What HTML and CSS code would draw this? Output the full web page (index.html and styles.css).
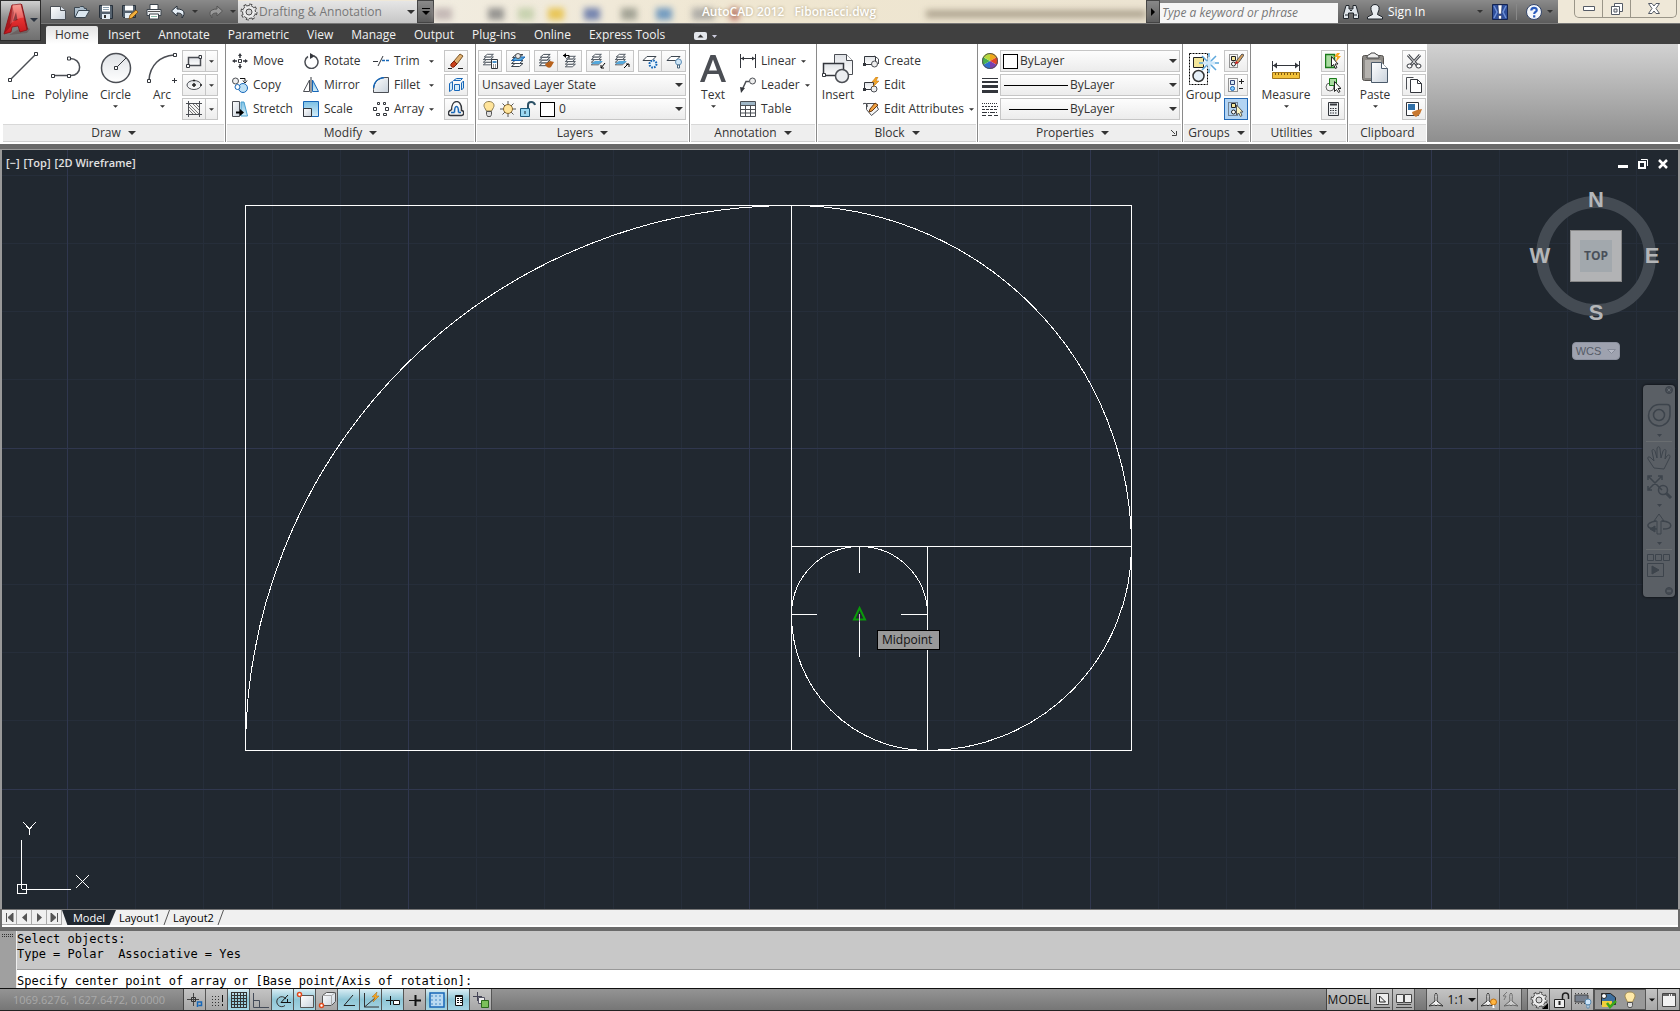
FILE: index.html
```html
<!DOCTYPE html>
<html lang="en">
<head>
<meta charset="utf-8">
<title>AutoCAD 2012 - Fibonacci.dwg</title>
<link rel="stylesheet" href="styles.css">
</head>
<body>
<svg class="defs" aria-hidden="true">
  <defs>
    <linearGradient id="gSteel" x1="0" y1="0" x2="0" y2="1"><stop offset="0" stop-color="#dfe2e6"/><stop offset="1" stop-color="#fff"/></linearGradient>
    <linearGradient id="gPaper" x1="0" y1="0" x2="1" y2="1"><stop offset="0" stop-color="#fff"/><stop offset="1" stop-color="#c9d2dc"/></linearGradient>
    <linearGradient id="gBlue" x1="0" y1="0" x2="0" y2="1"><stop offset="0" stop-color="#7cc0e4"/><stop offset="1" stop-color="#d5eef9"/></linearGradient>
    <linearGradient id="gRed" x1="0" y1="0" x2="0" y2="1"><stop offset="0" stop-color="#f4897c"/><stop offset=".5" stop-color="#e53232"/><stop offset="1" stop-color="#c4161c"/></linearGradient>
    <pattern id="grid" width="341" height="341" x="67" y="107" patternUnits="userSpaceOnUse">
      <path d="M68.5 0V341M136.500 0V341M205.500 0V341M273.500 0V341M0 68.500H341M0 136.500H341M0 204.500H341M0 272.500H341" stroke="#262e3a"/>
      <path d="M.5 0V341M0 .5H341" stroke="#30374e"/>
    </pattern>
    <symbol id="tri" viewBox="0 0 8 4"><path d="M0 0h8L4 4z" fill="currentColor"/></symbol>
    <symbol id="sheets" viewBox="0 0 16 16"><g fill="#fff" stroke="#3d4650"><path d="M1.500 13.500L5 10.500h8l-3.500 3z"/><path d="M1.500 10.500L5 7.500h8l-3.500 3z"/><path d="M1.500 7.500L5 4.500h8l-3.500 3z"/><path d="M2.500 4.500L6 1.500h7l-3.500 3z"/></g></symbol>
    <symbol id="gear" viewBox="0 0 18 18"><circle cx="9" cy="9" r="7" fill="none" stroke="#4a4a4a" stroke-width="3" stroke-dasharray="2.750 2.750"/><circle cx="9" cy="9" r="6.500" fill="#ececec" stroke="#4a4a4a"/><circle cx="9" cy="9" r="6.500" fill="none" stroke="#ececec" stroke-width="2" stroke-dasharray="1.500 3.600"/><circle cx="9" cy="9" r="3" fill="#d4d4d4" stroke="#4a4a4a"/></symbol>
  </defs>
</svg>

<header class="top">
  <button class="app" aria-label="Application menu">
    <svg width="40" height="40" viewBox="0 0 40 40"><path d="M8 34l18-2 3-4-6-3z" fill="#5b4545" opacity=".45"/><path d="M11 4L20 3l6 26-7 2-2-6-6 1-1 5-7 2z" fill="url(#gRed)" stroke="#8d1015" stroke-width=".8"/><path d="M20 3l1-0 6 25-1 1z" fill="#8d1015"/><path d="M12 20l3-9 1.500 8z" fill="#6d1014"/><path d="M11 4l2 8-3 13-7 8z" fill="#8d1015" opacity=".65"/><path d="M12 3.500h8l3 13c-5 0-10 3-14 7z" fill="#fff" opacity=".2"/><path d="M29 17h8l-4 4z" fill="#2c3440"/></svg>
  </button>

  <div class="titlebar">
    <div class="qat">
      <button aria-label="New"><svg width="16" height="16"><path d="M.5 2.500h10l5 4v9H.5z" fill="url(#gPaper)" stroke="#4a4f55"/><path d="M10.500 2.500v4h5" fill="#dfe6ee" stroke="#4a4f55"/></svg></button>
      <button aria-label="Open"><svg width="16" height="16"><path d="M.5 13.500V3.500h5l1-1h3l1 2h2v2" fill="#aebfcd" stroke="#3b4650"/><path d="M1 13.500l3.500-7h11l-4 7z" fill="#dbe7f0" stroke="#3b4650"/></svg></button>
      <button aria-label="Save"><svg width="16" height="16"><path d="M1.500 1.500h13v13h-12l-1-1z" fill="#54616e" stroke="#27303a"/><path d="M4 1.500h8v6H4z" fill="#fff"/><path d="M4 10h8v5H4z" fill="#e4edf4"/><path d="M6 11h2v3H6z" fill="#333"/><path d="M5 3.500h6M5 5.500h6" stroke="#8ba0b0"/></svg></button>
      <button aria-label="Save As"><svg width="16" height="16"><path d="M.5 1.500h13v12h-12l-1-1z" fill="#54616e" stroke="#27303a"/><path d="M3 1.500h8v5H3z" fill="#fff"/><path d="M3 9h6v5H3z" fill="#e4edf4"/><path d="M7 15l1-4 6-5 2 2-6 6z" fill="#f3b03c" stroke="#7a4a12" stroke-width=".8"/></svg></button>
      <button aria-label="Plot"><svg width="16" height="16"><path d="M4 .5h8v5H4z" fill="#fff" stroke="#3c444c"/><path d="M1 5.500h14v6H1z" fill="#eef1f4" stroke="#3c444c"/><path d="M2 7.500h12" stroke="#555"/><path d="M3.500 10h9v5h-9z" fill="#fff" stroke="#3c444c"/><path d="M5 12.500h6" stroke="#8ba"/></svg></button>
      <button aria-label="Undo"><svg width="16" height="16"><path d="M7 2L1.500 7 7 12V9c4 0 6 1 5 5 4-5 2-9-5-9z" fill="#e6eef6" stroke="#27303a"/></svg></button>
      <button class="mini" aria-label="Undo list"><svg width="6" height="3"><use href="#tri"/></svg></button>
      <button aria-label="Redo"><svg width="16" height="16"><path d="M9 2l5.500 5L9 12V9c-4 0-6 1-5 5C0 9 2 5 9 5z" fill="#999" stroke="#555"/></svg></button>
      <button class="mini" aria-label="Redo list"><svg width="6" height="3"><use href="#tri"/></svg></button>
    </div>
    <label class="combo workspace">
      <svg width="18" height="18"><use href="#gear"/></svg>
      <select aria-label="Workspace"><option>Drafting &amp; Annotation</option></select>
      <svg class="arr" width="8" height="4"><use href="#tri"/></svg>
    </label>
    <button class="qatmore" aria-label="Customize"><svg width="8" height="8"><path d="M0 .5h8" stroke="#000"/><path d="M0 3h8L4 7z"/></svg></button>
    <div class="caption">
      <div class="ghost" aria-hidden="true"><i class="b1"></i><i class="b2"></i><i class="b3"></i><i class="b4"></i><i class="b5"></i><i class="b6"></i><i class="b7"></i><i class="b8"></i><i class="b9"></i><i class="b10"></i></div>
      <span>AutoCAD 2012</span><span>Fibonacci.dwg</span>
    </div>
    <div class="info">
      <button class="expand" aria-label="Collapse search"><svg width="5" height="8"><path d="M0 0l4 4-4 4z" fill="#000"/></svg></button>
      <input type="search" aria-label="Search" placeholder="Type a keyword or phrase">
      <button aria-label="Find"><svg width="16" height="16"><path d="M3 1.500h3V5h4V1.500h3l2.500 9v4h-5V9h-5v5.500H.5v-4z" fill="#dfe5ea" stroke="#20262c"/><path d="M2 11h3M11 11h3M7 6.500h2" stroke="#20262c"/></svg></button>
      <button class="sign"><svg width="16" height="16"><path d="M8 .5c3 0 4.500 2 4 5-.3 2-1.500 3.500-1.500 5l5 2.500v2H.5v-2l5-2.500C5.500 9 4.300 7.500 4 5.500c-.5-3 1-5 4-5z" fill="#e9edf1" stroke="#20262c"/></svg>Sign In <svg width="6" height="3"><use href="#tri"/></svg></button>
      <button class="exch" aria-label="Exchange"><svg width="16" height="16"><path d="M.5.5h15v15H.5z" fill="#2f4f9c" stroke="#14234e"/><path d="M2 2l3 6-3 6M14 2l-3 6 3 6" fill="none" stroke="#6f90d4" stroke-width="1.500"/><path d="M6 1h4l-.7 9H6.700zM6.500 11.500h3V15h-3z" fill="#fff" stroke="#14234e" stroke-width=".5"/></svg></button>
      <button class="help" aria-label="Help"><svg width="16" height="16"><circle cx="8" cy="8" r="7.500" fill="#f4f7fb" stroke="#33456a"/><path d="M5.300 6.500C5.300 2.800 11 3 10.700 6.300 10.500 8 8.200 8 8.200 10M8.200 11.200v2.300" fill="none" stroke="#2a5bbd" stroke-width="2.200"/></svg></button>
      <button aria-label="Help menu"><svg width="6" height="3"><use href="#tri"/></svg></button>
    </div>
    <div class="winbtns">
      <button aria-label="Minimize"><svg width="12" height="5"><path d="M.5.5h11v4H.5z" fill="#fff" stroke="#555b66"/></svg></button>
      <button aria-label="Restore"><svg width="12" height="12"><path d="M3.500.5h8v8h-8z" fill="#fff" stroke="#555b66"/><path d="M.5 3.500h8v8h-8z" fill="#fff" stroke="#555b66"/><path d="M3 6h3v3H3z" fill="#eee" stroke="#555b66"/></svg></button>
      <button aria-label="Close"><svg width="12" height="11"><path d="M.5.5h3.500L6 3l2-2.500h3.500L8 5.500l3.500 5H8L6 8l-2 2.500H.5L4 5.500z" fill="#fff" stroke="#555b66"/></svg></button>
    </div>
  </div>

  <nav class="tabs">
    <a class="on" href="#home">Home</a><a href="#insert">Insert</a><a href="#annotate">Annotate</a><a href="#parametric">Parametric</a><a href="#view">View</a><a href="#manage">Manage</a><a href="#output">Output</a><a href="#plugins">Plug-ins</a><a href="#online">Online</a><a href="#express">Express Tools</a>
    <button aria-label="Minimize ribbon"><svg width="24" height="8"><rect width="13" height="8" rx="2" fill="#e4e7ec"/><path d="M3.500 5.500h6L6.500 2.500z" fill="#333"/><path d="M18 3h5l-2.500 3z" fill="#ccd"/></svg></button>
  </nav>
</header>

<main class="ribbon" id="home">
  <section class="panel draw">
    <div class="body">
      <button class="big"><svg width="32" height="32"><path d="M4 28L28 4" stroke="#4b4e54" stroke-width="1.500"/><path d="M1.500 27.500h3v3h-3zM27.500 1.500h3v3h-3z" fill="#fff" stroke="#33363c"/></svg>Line</button>
      <button class="big"><svg width="32" height="32"><path d="M3 24.500h17M18 7.500c14-1 14 18 1 17" fill="none" stroke="#4b4e54" stroke-width="1.500"/><path d="M.5 23.500h3v3h-3zM16.500 23.500h3v3h-3zM16.500 6h3v3h-3z" fill="#fff" stroke="#33363c"/></svg>Polyline</button>
      <button class="big"><svg width="32" height="32"><circle cx="16" cy="17" r="14.500" fill="url(#gSteel)" stroke="#4b4e54" stroke-width="1.500"/><path d="M17 16l9-9" stroke="#33363c"/><path d="M14.500 15.500h3v3h-3z" fill="#fff" stroke="#33363c"/></svg>Circle<svg class="dn" width="5" height="3"><use href="#tri"/></svg></button>
      <button class="big"><svg width="32" height="32"><path d="M3 29C4 14 14 5 28 4" fill="none" stroke="#4b4e54" stroke-width="1.500"/><path d="M1.500 28.500h3v3h-3zM27.500 2.500h3v3h-3z" fill="#fff" stroke="#33363c"/><path d="M28.500 27v5M26 29.500h5" stroke="#33363c"/></svg>Arc<svg class="dn" width="5" height="3"><use href="#tri"/></svg></button>
      <div class="stack">
        <div class="split"><button aria-label="Rectangle"><svg width="16" height="16"><path d="M2.500 4.500h12v8h-12z" fill="url(#gSteel)" stroke="#4b4e54" stroke-width="1.500"/><path d="M.5 11.500h3v3h-3zM13 2.500h2.500v3H13z" fill="#fff" stroke="#33363c"/></svg></button><button aria-label="Rectangle options"><svg width="5" height="3"><use href="#tri"/></svg></button></div>
        <div class="split"><button aria-label="Ellipse"><svg width="16" height="16"><ellipse cx="8" cy="8" rx="7" ry="4.500" fill="url(#gSteel)" stroke="#4b4e54"/><path d="M8 6v4M6 8h4M7 3.500h2M14 8h2" stroke="#222" stroke-width="1.500"/></svg></button><button aria-label="Ellipse options"><svg width="5" height="3"><use href="#tri"/></svg></button></div>
        <div class="split"><button aria-label="Hatch"><svg width="16" height="16"><path d="M2.500 0v16M13.500 0v16M0 2.500h16M0 13.500h16" stroke="#4b4e54"/><path d="M3 6l7 7M3 3l10 10M7 3l6 6M3 9l4 4M10 3l3 3" stroke="#777"/></svg></button><button aria-label="Hatch options"><svg width="5" height="3"><use href="#tri"/></svg></button></div>
      </div>
    </div>
    <button class="ptitle">Draw <svg width="8" height="4"><use href="#tri"/></svg></button>
  </section>

  <section class="panel modify">
    <div class="body">
      <div class="stack">
        <button class="cmd"><svg width="16" height="16"><path d="M8 2v3M8 11v3M2 8h3M11 8h3" stroke="#33363c" stroke-width="1.500"/><path d="M6 3l2-3 2 3zM6 13l2 3 2-3zM3 6L0 8l3 2zM13 6l3 2-3 2z" fill="#33363c"/><path d="M6.500 6.500h3v3h-3z" fill="#fff" stroke="#33363c"/></svg>Move</button>
        <button class="cmd"><svg width="16" height="16"><circle cx="3.500" cy="4" r="3" fill="#eee" stroke="#4b4e54"/><circle cx="11" cy="11" r="4.500" fill="#bfe1f5" stroke="#1767b8"/><circle cx="5.500" cy="10" r="2.500" fill="#fff" stroke="#1767b8"/><path d="M8 1.500h5V4M11 3.500l2 2.500 2-2.500" fill="none" stroke="#111"/></svg>Copy</button>
        <button class="cmd"><svg width="16" height="16"><path d="M.5.500h7v15h-7z" fill="url(#gPaper)" stroke="#4b4e54"/><path d="M9 1h3l3.500 14H9z" fill="url(#gBlue)" stroke="#4aa0d0"/><path d="M4 11.500h6" stroke="#000" stroke-width="2"/><path d="M8 8l4 3.500L8 15z"/></svg>Stretch</button>
      </div>
      <div class="stack">
        <button class="cmd"><svg width="16" height="16"><path d="M5 3.500A6.500 6.500 0 1 0 11 3" fill="none" stroke="#4b4e54" stroke-width="1.500"/><path d="M7 0l5 3-5 3z" fill="#33363c"/></svg>Rotate</button>
        <button class="cmd"><svg width="16" height="16"><path d="M6.500 3v11.500H.5z" fill="#fff" stroke="#4b4e54"/><path d="M9.500 3v11.500h6z" fill="url(#gBlue)" stroke="#1767b8"/><path d="M8 0v16" stroke="#33363c"/></svg>Mirror</button>
        <button class="cmd"><svg width="16" height="16"><path d="M.5.500h15v15h-15z" fill="url(#gBlue)" stroke="#1767b8"/><path d="M.5 7.500h8v8h-8z" fill="url(#gPaper)" stroke="#33363c"/></svg>Scale</button>
      </div>
      <div class="stack">
        <button class="cmd wide"><svg width="16" height="16"><path d="M0 8.500h5M5 13l5-10" stroke="#33363c"/><path d="M9 7.500h3M13 7.500h3" stroke="#1767b8" stroke-width="1.500"/></svg>Trim<svg class="r" width="5" height="3"><use href="#tri"/></svg></button>
        <button class="cmd wide"><svg width="16" height="16"><path d="M.5 15.500v-3C1 5 5 1 12 .5h3.500v15z" fill="url(#gPaper)" stroke="#4b4e54"/><path d="M.5 11C1 5 5 1 11 .5" fill="none" stroke="#1767b8" stroke-width="1.500"/></svg>Fillet<svg class="r" width="5" height="3"><use href="#tri"/></svg></button>
        <button class="cmd wide"><svg width="16" height="16"><g fill="#fff" stroke="#33363c"><path d="M4.500 1.500h2v2h-2zM10.500 1.500h2v2h-2zM.5 6.500h3v3h-3zM12.500 6.500h3v3h-3zM3.500 12.500h3v2h-3zM10.500 12.500h3v2h-3z"/></g></svg>Array<svg class="r" width="5" height="3"><use href="#tri"/></svg></button>
      </div>
      <div class="stack">
        <button class="ib" aria-label="Erase"><svg width="16" height="16"><path d="M6 8L12 1l3 2-6 8z" fill="#e0b070" stroke="#7a5526"/><path d="M3 11l3-3 3 3-3 3c-2 1-4-1-3-3z" fill="#c9401a" stroke="#7c250c"/><path d="M0 15.500h4M10 15.500h5" stroke="#222"/></svg></button>
        <button class="ib" aria-label="Explode"><svg width="16" height="16"><g fill="#d5ecf9" stroke="#1767b8"><path d="M1.500 6.500l3-2v8l-3 2zM5.500 3.500l3-2h6l-2 2zM6.500 7.500h5v6h-5zM13.500 6l2-2v7l-2 2z"/></g></svg></button>
        <button class="ib" aria-label="Offset"><svg width="16" height="16"><path d="M3.500 9c0-11 10-11 10-1v1.500c3 0 3 5 0 5h-11c-3 0-3-5 1-5.500" fill="none" stroke="#33363c" stroke-width="1.500"/><path d="M6.500 11.500c0-8 4-8 4 0M3 11.500h3.500M10.500 11.500H13" fill="none" stroke="#1767b8" stroke-width="1.500"/></svg></button>
      </div>
    </div>
    <button class="ptitle">Modify <svg width="8" height="4"><use href="#tri"/></svg></button>
  </section>

  <section class="panel layers">
    <div class="body stack">
      <div class="row">
        <div class="grp"><button aria-label="Layer properties"><svg width="16" height="16"><use href="#sheets" width="14" height="14"/><path d="M9.500 6.500h6v9h-6z" fill="#fff" stroke="#33363c"/><path d="M10.500 8h4v2h-4z" fill="#4a90c8"/><path d="M11 12h1M13 12h1M11 14h1M13 14h1" stroke="#333"/></svg></button></div>
        <div class="grp"><button aria-label="Make current"><svg width="16" height="16"><use href="#sheets" width="16" height="16"/><path d="M2 7.500L6 4h9l-4 3.500z" fill="#54a8dc" stroke="#1767b8"/><circle cx="8" cy="3" r="2.500" fill="#eee" stroke="#555"/></svg></button></div>
        <div class="grp"><button aria-label="Match"><svg width="16" height="16"><use href="#sheets" width="15" height="15"/><path d="M7 11l5-3 4 1-3 5c-2 2-5 0-6-3z" fill="#b8621c"/></svg></button><button aria-label="Previous"><svg width="16" height="16"><use href="#sheets" x="2" y="2" width="14" height="14"/><path d="M1 2.500h6v3" fill="none" stroke="#000"/><path d="M4 0L1 2.500 4 5z"/></svg></button></div>
        <div class="grp"><button aria-label="Isolate"><svg width="16" height="16"><use href="#sheets" width="14" height="14"/><path d="M1 11l4-3h8l-4 3z" fill="#54a8dc"/><path d="M15 10l-4 5M11 12v3h3" fill="none" stroke="#000"/></svg></button><button aria-label="Unisolate"><svg width="16" height="16"><use href="#sheets" width="14" height="14"/><path d="M1 11l4-3h8l-4 3z" fill="#54a8dc"/><path d="M10 15l4-4M12 11h3v3" fill="none" stroke="#000"/></svg></button></div>
        <div class="grp"><button aria-label="Freeze"><svg width="16" height="16"><path d="M1 7.500l4-4h9l-4 4z" fill="#fff" stroke="#3d4650"/><circle cx="11" cy="11" r="3.500" fill="#e7f4fd" stroke="#1767b8" stroke-width="2" stroke-dasharray="1.700 1"/></svg></button><button aria-label="Off"><svg width="16" height="16"><path d="M1 7.500l4-4h9l-4 4z" fill="#fff" stroke="#3d4650"/><circle cx="12.500" cy="9" r="3" fill="#cfe6f7" stroke="#5f8fb5"/><path d="M11.500 12h2v3h-2z" fill="#fff" stroke="#47637a"/></svg></button></div>
      </div>
      <label class="combo"><select aria-label="Layer state"><option>Unsaved Layer State</option></select><svg class="arr" width="8" height="4"><use href="#tri"/></svg></label>
      <label class="combo lay">
        <svg width="16" height="16"><path d="M8 .5c-4 0-6 3-4.500 6L5.500 10h5l2-3.500C14 3.500 12 .5 8 .5z" fill="#ffe49a" stroke="#8a7a50"/><path d="M5.500 10.500h5v3l-1 2h-3l-1-2z" fill="#ddd" stroke="#555"/></svg>
        <svg width="16" height="16"><path d="M8 0v16M0 8h16M2.500 2.500l11 11M13.500 2.500l-11 11" stroke="#555"/><circle cx="8" cy="8" r="4.500" fill="#ffe49a" stroke="#8a6a30"/></svg>
        <svg width="18" height="16"><path d="M9 8V4c0-4 6-4 7 0" fill="none" stroke="#2c5166" stroke-width="2"/><path d="M1.500 7.500h9v8h-9z" fill="#9bd8f2" stroke="#1c5a7c"/><path d="M6 10v3" stroke="#123"/></svg>
        <i class="sw"></i>
        <select aria-label="Layer"><option>0</option></select><svg class="arr" width="8" height="4"><use href="#tri"/></svg></label>
    </div>
    <button class="ptitle">Layers <svg width="8" height="4"><use href="#tri"/></svg></button>
  </section>

  <section class="panel annot">
    <div class="body">
      <button class="big"><svg width="32" height="32"><path d="M3 31L13.500 4h5L29 31h-4.500l-3-8h-11l-3 8zM12 19.500h8L16 8.500z" fill="#4b4e54"/></svg>Text<svg class="dn" width="5" height="3"><use href="#tri"/></svg></button>
      <div class="stack">
        <button class="cmd"><svg width="16" height="16"><path d="M.5 1v14M15.500 1v14M1 5.500h14" stroke="#33363c"/><path d="M1 5.500l3-2v4zM15 5.500l-3-2v4z" fill="#33363c"/></svg>Linear<svg class="n" width="5" height="3"><use href="#tri"/></svg></button>
        <button class="cmd"><svg width="16" height="16"><circle cx="12.500" cy="4" r="3" fill="#eee" stroke="#4b4e54"/><path d="M9 4.500H6L2 13" fill="none" stroke="#4b4e54" stroke-width="1.500"/><path d="M0 10l5 1-4 5z" fill="#33363c"/></svg>Leader<svg class="n" width="5" height="3"><use href="#tri"/></svg></button>
        <button class="cmd"><svg width="16" height="16"><path d="M.5.500h15v15H.5z" fill="#fff" stroke="#4b4e54"/><path d="M1 1h14v3H1z" fill="#9fb6c6"/><path d="M1 4.500h14M1 8.500h14M1 12h14M5.500 4v12M10.500 4v12" stroke="#4b4e54"/></svg>Table</button>
      </div>
    </div>
    <button class="ptitle">Annotation <svg width="8" height="4"><use href="#tri"/></svg></button>
  </section>

  <section class="panel block">
    <div class="body">
      <button class="big"><svg width="32" height="32"><path d="M12.500 3.500h12l6 6v14h-18z" fill="url(#gSteel)" stroke="#4b4e54"/><path d="M24.500 3.500v6h6" fill="#fff" stroke="#4b4e54"/><path d="M1.500 12.500h20v12h-20z" fill="url(#gSteel)" stroke="#33363c" stroke-width="1.500"/><path d="M.5 22.500h3v3h-3z" fill="#fff" stroke="#33363c"/><circle cx="20" cy="25" r="6.500" fill="#eceef1" stroke="#4b4e54" stroke-width="1.500"/></svg>Insert</button>
      <div class="stack">
        <button class="cmd"><svg width="16" height="16"><path d="M1.500 3.500h11v8h-11z" fill="url(#gSteel)" stroke="#33363c"/><path d="M0 10h3v3H0z" fill="#33363c"/><circle cx="11.500" cy="11" r="3" fill="#eee" stroke="#4b4e54"/><path d="M11.500 3l4 3v5" fill="none" stroke="#4b4e54"/></svg>Create</button>
        <button class="cmd"><svg width="16" height="16"><path d="M1.500 5.500h9v7h-9z" fill="url(#gSteel)" stroke="#33363c"/><path d="M0 11h3v3H0z" fill="#33363c"/><circle cx="11" cy="12" r="3" fill="#eee" stroke="#4b4e54"/><path d="M13 0L9 5h3l-2 5 6-6h-3l2-4z" fill="#f7a823" stroke="#b56a0c" stroke-width=".5"/></svg>Edit</button>
        <button class="cmd"><svg width="16" height="16"><path d="M3.500 2.500h9l3 6-7 6-5-6z" fill="#f4f4f4" stroke="#4b4e54"/><path d="M0 3c3-2 5 1 4 3" fill="none" stroke="#33363c"/><path d="M6 11l1-3 5-6 3 2-6 6z" fill="#f0a040" stroke="#6a3a10"/></svg>Edit Attributes<svg class="n" width="5" height="3"><use href="#tri"/></svg></button>
      </div>
    </div>
    <button class="ptitle">Block <svg width="8" height="4"><use href="#tri"/></svg></button>
  </section>

  <section class="panel props">
    <div class="body stack">
      <label class="prop"><svg width="16" height="16"><path d="M8 8V0a8 8 0 0 1 7 4z" fill="#f0a818"/><path d="M8 8l7-4a8 8 0 0 1 0 8z" fill="#e2452a"/><path d="M8 8l7 4a8 8 0 0 1-7 4z" fill="#7a3fb0"/><path d="M8 8v8a8 8 0 0 1-7-4z" fill="#2f6fd0"/><path d="M8 8l-7 4a8 8 0 0 1 0-8z" fill="#47b050"/><path d="M8 8L1 4a8 8 0 0 1 7-4z" fill="#b8d83c"/><circle cx="8" cy="8" r="7.500" fill="none" stroke="#555"/></svg><span class="combo"><i class="sw"></i><select aria-label="Color"><option>ByLayer</option></select><svg class="arr" width="8" height="4"><use href="#tri"/></svg></span></label>
      <label class="prop"><svg width="16" height="16"><path d="M0 1h16v1H0zM0 4h16v2H0zM0 8h16v3H0zM0 13h16v3H0z" fill="#33363c"/></svg><span class="combo"><i class="ln"></i><select aria-label="Lineweight"><option>ByLayer</option></select><svg class="arr" width="8" height="4"><use href="#tri"/></svg></span></label>
      <label class="prop"><svg width="16" height="16"><path d="M0 2.500h16" stroke="#33363c" stroke-dasharray="1 1"/><path d="M0 5.500h16" stroke="#33363c" stroke-dasharray="2 1"/><path d="M0 8.500h16" stroke="#33363c" stroke-dasharray="3 1"/><path d="M0 11.500h16" stroke="#33363c" stroke-dasharray="5 1 1 1"/><path d="M0 14.500h16" stroke="#33363c" stroke-dasharray="4 2"/></svg><span class="combo"><i class="ln short"></i><select aria-label="Linetype"><option>ByLayer</option></select><svg class="arr" width="8" height="4"><use href="#tri"/></svg></span></label>
    </div>
    <button class="ptitle">Properties <svg width="8" height="4"><use href="#tri"/></svg><svg class="launch" width="6" height="6"><path d="M0 0l4 4M5.500 1v4.500H1" fill="none" stroke="#444"/></svg></button>
  </section>

  <section class="panel groups">
    <div class="body">
      <button class="big"><svg width="32" height="32"><path d="M1.500 2.500h18v31h-18z" fill="none" stroke="#000" stroke-dasharray="2 1"/><path d="M5.500 6.500h10v10h-10z" fill="#f5e79a" stroke="#222"/><circle cx="10.500" cy="25" r="5.500" fill="#e6f0f8" stroke="#333" stroke-width="1.500"/><path d="M21 2v20M11 12h20M14 5l14 14M28 5L14 19" stroke="#5ea8dc" stroke-width="1.500"/><path d="M21 6v12M15 12h12" stroke="#cfe8fa" stroke-width="3"/></svg>Group</button>
      <div class="stack">
        <button class="ib" aria-label="Ungroup"><svg width="16" height="16"><path d="M1.500 1.500h8v13h-8z" fill="none" stroke="#333" stroke-dasharray="1 1"/><path d="M3.500 3.500h4v4h-4z" fill="#f5e79a" stroke="#222"/><circle cx="5.500" cy="11" r="2" fill="#fff" stroke="#222"/><path d="M7 11l2-4 5-6 2 1-5 7z" fill="#d9a05a" stroke="#555"/><path d="M7 11l1-3 3 2z" fill="#d22"/></svg></button>
        <button class="ib" aria-label="Group edit"><svg width="16" height="16"><path d="M.5 1.500h9v13h-9z" fill="none" stroke="#333" stroke-dasharray="1 1"/><path d="M2.500 3.500h4v4h-4z" fill="#d5eaf5" stroke="#347"/><circle cx="4.500" cy="11.500" r="2" fill="#8cf" stroke="#1767b8"/><path d="M11 4.500h5M13.500 2v5M11 11.500h4" stroke="#222"/></svg></button>
        <button class="ib active" aria-label="Group selection"><svg width="16" height="16"><path d="M.5 1.500h9v13h-9z" fill="none" stroke="#333" stroke-dasharray="1 1"/><path d="M3.500 2.500h4v4h-4z" fill="#f5e79a" stroke="#222"/><circle cx="5.500" cy="11" r="2" fill="#fff" stroke="#222"/><path d="M8.500 4v10l2-2 2 3.500 1.500-1L12.500 11H15z" fill="#fbf4c0" stroke="#555"/></svg></button>
      </div>
    </div>
    <button class="ptitle">Groups <svg width="8" height="4"><use href="#tri"/></svg></button>
  </section>

  <section class="panel utils">
    <div class="body">
      <button class="big"><svg width="32" height="32"><path d="M2.500 10v10M29.500 10v10M3 14.500h26" stroke="#33363c"/><path d="M3 14.500l4-3v6zM29 14.500l-4-3v6z" fill="#33363c"/><path d="M2.500 21.500h27v6h-27z" fill="#f2c13a" stroke="#a0741a"/><path d="M5.500 22v2M8.500 22v2M11.500 22v2M14.500 22v2M17.500 22v2M20.500 22v2M23.500 22v2M26.500 22v2" stroke="#7a5512"/></svg>Measure<svg class="dn" width="5" height="3"><use href="#tri"/></svg></button>
      <div class="stack">
        <button class="ib" aria-label="Quick select"><svg width="16" height="16"><path d="M.5 1.500h9v13h-9z" fill="#a9dca0" stroke="#1a7a1a" stroke-width="1.500"/><path d="M6.500 3.500v10l2-2 2 4 1.500-1-2-3.500h3z" fill="#fff" stroke="#222"/><path d="M12 0L9 4h3l-1 5 5-6h-3l2-3z" fill="#f7a823"/></svg></button>
        <button class="ib" aria-label="Select similar"><svg width="16" height="16"><circle cx="5" cy="10" r="4" fill="none" stroke="#666"/><path d="M4.500 1.500h7v7h-7z" fill="#a9dca0" stroke="#1a7a1a"/><path d="M9.500 4.500v10l2-2 2 3 1.500-1-2-3h3z" fill="#fff" stroke="#222"/></svg></button>
        <button class="ib" aria-label="Calculator"><svg width="16" height="16"><path d="M3.500 1.500h10v13h-10z" fill="#eef0f2" stroke="#33363c"/><path d="M5 3.500h7" stroke="#33363c" stroke-width="2"/><path d="M5 7.500h7M5 9.500h7M5 12h7" stroke="#33363c" stroke-dasharray="1.500 1"/></svg></button>
      </div>
    </div>
    <button class="ptitle">Utilities <svg width="8" height="4"><use href="#tri"/></svg></button>
  </section>

  <section class="panel clip">
    <div class="body">
      <button class="big"><svg width="32" height="32"><rect x="3.500" y="4.500" width="21" height="25" rx="2" fill="#8d8a86" stroke="#55524f"/><path d="M8 6c0-3 4-2 4-4h4c0 2 4 1 4 4v1H8z" fill="#eee" stroke="#444"/><path d="M6 9h16v18H6z" fill="#b5b2ae"/><path d="M12.500 11.500h10l6 6v14h-16z" fill="url(#gPaper)" stroke="#4b5a6a"/><path d="M22.500 11.500v6h6" fill="#fff" stroke="#4b5a6a"/></svg>Paste<svg class="dn" width="5" height="3"><use href="#tri"/></svg></button>
      <div class="stack">
        <button class="ib" aria-label="Cut"><svg width="16" height="16"><path d="M2 2l9 10M14 2L5 12" stroke="#4b4e54" stroke-width="3"/><path d="M2 2l9 10M14 2L5 12" stroke="#eee"/><ellipse cx="3.500" cy="13" rx="2.500" ry="2" fill="#fff" stroke="#33363c"/><ellipse cx="12.500" cy="13" rx="2.500" ry="2" fill="#fff" stroke="#33363c"/></svg></button>
        <button class="ib" aria-label="Copy clip"><svg width="16" height="16"><path d="M.5 12.500v-12h7" fill="none" stroke="#4b4e54"/><path d="M4.500 2.500h7l4 4v9h-11z" fill="#fff" stroke="#33363c"/><path d="M11.500 2.500v4h4" fill="none" stroke="#33363c"/></svg></button>
        <button class="ib" aria-label="Match properties"><svg width="16" height="16"><path d="M.5 1.500h12v13H.5z" fill="#fff" stroke="#33363c"/><path d="M2 3h7v6H2z" fill="#2f6fa8"/><path d="M6 11l5-2 5-1-2 5-4 3c-2-1-4-3-4-5z" fill="#c87830"/></svg></button>
      </div>
    </div>
    <div class="ptitle">Clipboard</div>
  </section>
  <div class="fill"></div>
</main>

<section class="canvas">
  <svg class="drawing" width="100%" height="100%" aria-label="Fibonacci spiral">
    <rect width="100%" height="100%" fill="#212830"/>
    <g transform="translate(-2 -150)">
      <rect x="0" y="150" width="100%" height="100%" fill="url(#grid)"/>
      <g fill="none" stroke="#fff" shape-rendering="crispEdges">
        <path d="M245.500 205.500h886v545h-886zM791.500 205.500v545M791.500 546.500h340M927.500 546.500v204"/>
        <path d="M245.500 750.500A546 545 0 0 1 791.500 205.500A340 341 0 0 1 1131.500 546.500A204 204 0 0 1 927.500 750.500A136 136 0 0 1 791.500 614.500A68 68 0 0 1 927.500 614.500"/>
        <path d="M859.500 546v27M791 614.500h26M901 614.500h26M859.500 614v43"/>
        <path d="M21.500 840v49M22 889.500h49M17.500 884.500h9v9h-9z"/>
        <path d="M23 822l6.500 7 6.500-7M29.500 829v6M76 875l13 13M89 875l-13 13"/>
      </g>
      <path d="M859.500 608l5.500 11.500h-11z" fill="none" stroke="#0a9a0a" stroke-width="2"/>
      <path d="M859.500 614v8" stroke="#d9b3d9"/>
    </g>
  </svg>
  <div class="vctrl"><button>[−]</button><button>[Top]</button><button>[2D Wireframe]</button></div>
  <div class="docbtns">
    <button aria-label="Minimize drawing"><svg width="10" height="10"><path d="M0 6h10v3H0z" fill="#fff"/></svg></button>
    <button aria-label="Restore drawing"><svg width="10" height="10"><path d="M3 .5h6.500V7" fill="none" stroke="#fff"/><path d="M1 3h6v6H1z" fill="none" stroke="#fff" stroke-width="2"/></svg></button>
    <button aria-label="Close drawing"><svg width="10" height="10"><path d="M1 1l8 8M9 1L1 9" stroke="#fff" stroke-width="2.500"/></svg></button>
  </div>
  <div class="cube">
    <svg width="120" height="120"><circle cx="60" cy="60" r="54" fill="none" stroke="#444b53" stroke-width="12"/></svg>
    <b class="n">N</b><b class="w">W</b><button class="face"><span>TOP</span></button><b class="e">E</b><b class="s">S</b>
  </div>
  <button class="wcs">WCS <svg width="9" height="5"><path d="M.5.500h8l-4 4z" fill="#b4b8c4" stroke="#858a98"/></svg></button>
  <div class="navbar">
    <svg width="32" height="212" fill="none" stroke="#3d444c">
      <circle cx="26" cy="5" r="3.500" fill="#454b52"/><path d="M24.500 3.500l3 3M27.500 3.500l-3 3" stroke="#666c73"/>
      <path d="M16 19.500h8c2 0 3 1 3 3V30c0 6-5 11-11 11S5.500 36 5.500 30.500 10 19.500 16 19.500z" stroke-width="1.500"/><circle cx="16" cy="30" r="5.500" stroke-width="1.500"/>
      <path d="M14 49h5l-2.500 3z" fill="#3d444c" stroke="none"/><path d="M3 56.500h26" stroke="#696d70"/>
      <path d="M11 83l-6-9c-1-2 1-3 3-1l3 3-2-10c0-2 2-2 3 0l2 7v-9c0-3 3-3 3 0l1 9 2-7c1-2 3-2 3 0l-1 8 2-3c2-2 3-1 3 1l-4 8-2 4z"/>
      <path d="M5 91l14 14M19 91L5 105M5 95v-4h4M15 91h4v4M5 101v4h4" stroke-width="1.500"/><circle cx="20" cy="105" r="4.500" stroke-width="1.500"/><path d="M23 108l5 5" stroke-width="3"/>
      <path d="M14 119h5l-2.500 3z" fill="#3d444c" stroke="none"/>
      <path d="M14 149v-13h-3l5-7 5 7h-3v13z"/><path d="M13 136c-12 2-10 8 1 8M19 136c12 1 11 8 1 8" stroke-width="1.500"/><path d="M7 144l5-3v6z" fill="#3d444c"/>
      <path d="M14 157h5l-2.500 3z" fill="#3d444c" stroke="none"/><path d="M3 164.500h26" stroke="#696d70"/>
      <path d="M4.500 169.500h6v6h-6zM12.500 169.500h6v6h-6zM20.500 169.500h6v6h-6zM4.500 178.500h16v13h-16z"/><path d="M9 181l7 4-7 4z" fill="#3d444c"/>
      <circle cx="26" cy="206" r="3.500" fill="#454b52"/><path d="M24 206h4" stroke="#666c73"/>
    </svg>
  </div>
  <div class="snaptip">Midpoint</div>
</section>

<nav class="layouts">
  <button class="nb" aria-label="First"><svg width="9" height="9"><path d="M1.500 0v9M8 0L3 4.500 8 9z" fill="#555" stroke="#555"/></svg></button>
  <button class="nb" aria-label="Previous"><svg width="9" height="9"><path d="M7 0L2 4.500 7 9z" fill="#555"/></svg></button>
  <button class="nb" aria-label="Next"><svg width="9" height="9"><path d="M2 0l5 4.500L2 9z" fill="#555"/></svg></button>
  <button class="nb" aria-label="Last"><svg width="9" height="9"><path d="M7.500 0v9M1 0l5 4.500L1 9z" fill="#555" stroke="#555"/></svg></button>
  <a class="model" href="#model">Model</a>
  <a href="#layout1">Layout1</a><svg width="7" height="15"><path d="M6.500 0L1 15" stroke="#555"/></svg>
  <a href="#layout2">Layout2</a><svg width="7" height="15"><path d="M6.500 0L1 15" stroke="#555"/></svg>
</nav>

<section class="command">
  <div class="grip"></div>
  <div class="cmdtext">
    <pre>Select objects:
Type = Polar  Associative = Yes</pre>
    <input type="text" aria-label="Command line" value="Specify center point of array or [Base point/Axis of rotation]:">
  </div>
</section>

<footer class="status">
  <div class="coords">1069.6276, 1627.6472, 0.0000</div>
  <button aria-label="Infer"><svg width="18" height="18"><path d="M1 8.500h12M7.500 2v13" stroke="#444"/><path d="M5.500 6.500h4v4h-4z" fill="none" stroke="#333"/><path d="M11.500 16v-5h4v3.500h-3" fill="none" stroke="#1767b8" stroke-width="1.500"/></svg></button>
  <button aria-label="Snap"><svg width="18" height="18"><path d="M4 5.500h9M4 8.500h9M4 11.500h9M4 14.500h9" stroke="#333" stroke-dasharray="1 2"/><path d="M14.500 4v7M14.500 13v2" stroke="#111"/></svg></button>
  <button class="on" aria-label="Grid"><svg width="18" height="18"><path d="M1.500 1v16M4.500 1v16M7.500 1v16M10.500 1v16M13.500 1v16M16.500 1v16M1 1.500h16M1 4.500h16M1 7.500h16M1 10.500h16M1 13.500h16M1 16.500h16" stroke="#333"/></svg></button>
  <button aria-label="Ortho"><svg width="18" height="18"><path d="M1.500 2v14.500H17M1.500 9.500h6v7" fill="none" stroke="#444b58"/></svg></button>
  <button class="on" aria-label="Polar"><svg width="18" height="18"><path d="M11 14.500A5 5 0 1 1 12 8" fill="none" stroke="#333"/><path d="M7 11.500h10M7 11.500L14 4M13.500 8v4" fill="none" stroke="#111"/></svg></button>
  <button class="on" aria-label="Object snap"><svg width="18" height="18"><path d="M4.500 4.500h13v12h-13z" fill="url(#gPaper)" stroke="#555"/><circle cx="3.500" cy="3.500" r="2" fill="#fff" stroke="#e0491c" stroke-width="1.500"/></svg></button>
  <button aria-label="3D object snap"><svg width="18" height="18"><path d="M4.500 4.500l4-3h9v9l-4 4h-9z" fill="url(#gPaper)" stroke="#555"/><path d="M13.500 14.500v-10h-9M13.500 4.500l4-3" fill="none" stroke="#aaa"/><circle cx="3.500" cy="14.500" r="2" fill="#fff" stroke="#e0491c" stroke-width="1.500"/></svg></button>
  <button class="on" aria-label="Tracking"><svg width="18" height="18"><path d="M13 4L4 14.500h11" fill="none" stroke="#222"/></svg></button>
  <button class="on" aria-label="Dynamic UCS"><svg width="18" height="18"><path d="M2.500 2v14H17M2.500 16L13 7" fill="none" stroke="#333"/><path d="M15 1l-5 5h3l-2 5 6-6h-3z" fill="#f7a823" stroke="#a8660c" stroke-width=".5"/></svg></button>
  <button class="on" aria-label="Dynamic input"><svg width="18" height="18"><path d="M2 9.500h7M6.500 5v9" stroke="#111"/><path d="M9.500 9.500h6v4h-6z" fill="#fff" stroke="#111"/></svg></button>
  <button aria-label="Lineweight"><svg width="18" height="18"><path d="M3 9.500h7" stroke="#111"/><path d="M9 9.500h6M9.500 4v11" stroke="#111" stroke-width="2"/></svg></button>
  <button class="on" aria-label="Transparency"><svg width="18" height="18"><path d="M2 2h14v14H2z" fill="#b9daf2" stroke="#1767b8" stroke-width="1.500"/><path d="M3 5h12M3 9h12M3 13h12" stroke="#7fb2dc" stroke-width="2" stroke-dasharray="2 2"/></svg></button>
  <button class="on" aria-label="Quick properties"><svg width="18" height="18"><path d="M5.500 4.500h7v10h-7z" fill="#fff" stroke="#111"/><path d="M6 5.500h6" stroke="#111"/><path d="M7 7.500h2M10 7.500h2M7 9.500h2M10 9.500h2M7 11.500h2M10 11.500h2" stroke="#111"/></svg></button>
  <button aria-label="Selection cycling"><svg width="18" height="18"><path d="M1 5.500h9M5.500 1v9" stroke="#445"/><path d="M6.500 6.500h6v6h-6z" fill="#eee" stroke="#556"/><path d="M9.500 9.500h7v7h-7z" fill="#7cc05a" stroke="#2c6a1c"/></svg></button>
  <div class="space"></div>
  <button class="model">MODEL</button>
  <button aria-label="Quick view layouts"><svg width="18" height="18"><path d="M3.500 2.500h12v11h-12z" fill="#eee" stroke="#444"/><path d="M6.500 5v6h6z" fill="none" stroke="#222"/><path d="M1 16.500h16" stroke="#444"/></svg></button>
  <button aria-label="Quick view drawings"><svg width="18" height="18"><path d="M1.500 3.500h7v8h-7zM9.500 3.500h7v8h-7z" fill="#eee" stroke="#444"/><path d="M2 13.500h14M1 16.500h16" stroke="#444"/></svg></button>
  <i class="gap wide"></i>
  <button class="scale"><svg width="16" height="18"><path d="M8 2c2 1 1 6 1 8l6 5-6-1-1 1-1-1-6 1 6-5C7 8 6 3 8 2z" fill="#eee" stroke="#333"/></svg>1:1<svg width="8" height="4"><use href="#tri"/></svg></button>
  <button aria-label="Annotation visibility"><svg width="18" height="18"><path d="M8 2c2 1 1 6 1 8l6 5-6-1-1 1-1-1-6 1 6-5C7 8 6 3 8 2z" fill="#eee" stroke="#333"/><circle cx="13.500" cy="11" r="3" fill="#ffb640" stroke="#c07010"/><path d="M12.500 14h2v3h-2z" fill="#fff"/></svg></button>
  <button aria-label="Auto scale"><svg width="18" height="18"><path d="M9 2c2 1 1 6 1 8l6 5-6-1-1 1-1-1-6 1 6-5C8 8 7 3 9 2z" fill="#ccc" stroke="#666"/><path d="M5 1L1 5h3L2 9" fill="none" stroke="#777"/></svg></button>
  <i class="gap"></i>
  <button aria-label="Workspace switching"><svg width="18" height="18"><use href="#gear"/><path d="M18 12v6h-6z"/></svg></button>
  <button aria-label="Lock"><svg width="18" height="18"><path d="M10.500 8V5c0-4 6-4 6 0v3" fill="none" stroke="#222" stroke-width="1.500"/><path d="M2.500 8.500h10v8h-10z" fill="#eee" stroke="#222"/><path d="M7.500 10v4" stroke="#222" stroke-width="2"/></svg></button>
  <button aria-label="Hardware acceleration"><svg width="18" height="18"><path d="M1 4h13v7H1z" fill="#77808e" stroke="#444"/><path d="M1 2.500h13M1 12.500h10" stroke="#444" stroke-dasharray="1 2"/><circle cx="14" cy="11" r="3" fill="#cfe6fa" stroke="#5a8ab0"/><path d="M13 14h2v3h-2z" fill="#fff" stroke="#5a8ab0"/></svg></button>
  <div class="tray"><svg width="18" height="18"><path d="M2.500 2.500h9l5 4v7h-14z" fill="#3d6f9e" stroke="#222"/><path d="M3 10h10v6H3z" fill="#f2cf3c"/><circle cx="5" cy="5" r="2.500" fill="#fff" stroke="#222"/><path d="M8 12l3 4 6-6" fill="none" stroke="#3aa51c" stroke-width="2.500"/></svg><svg width="18" height="18"><path d="M9 1C5 1 3 4 4.500 7L6.500 11h5l2-4C15 4 13 1 9 1z" fill="#ffe9a8" stroke="#a08a50"/><path d="M6.500 11.500h5v3l-1 2h-3l-1-2z" fill="#ddd" stroke="#555"/></svg></div>
  <button class="more" aria-label="Status menu"><svg width="6" height="4"><use href="#tri"/></svg></button>
  <button class="clean" aria-label="Clean screen"><svg width="18" height="18"><path d="M2.500 2.500h13v13h-13z" fill="#f2f2f2" stroke="#444"/><path d="M3 4h12" stroke="#666" stroke-width="2" stroke-dasharray="6 1 1 1"/></svg></button>
</footer>
</body>
</html>
```
FILE: styles.css
```css
* { box-sizing: border-box; }
html, body { height: 100%; margin: 0; }
body {
  display: flex;
  flex-direction: column;
  background: #6a6a6a;
  color: #333;
  font: 12px/16px "Open Sans", "Noto Sans", sans-serif;
  overflow: hidden;
}
button, select, input { font: inherit; color: inherit; }
button {
  display: flex;
  align-items: center;
  justify-content: center;
  margin: 0;
  padding: 0;
  border: 0;
  background: none;
  white-space: nowrap;
}
a { color: inherit; text-decoration: none; }
svg { display: block; flex: none; }
.defs { position: absolute; width: 0; height: 0; }

/* Title bar and ribbon tabs */
.top {
  display: grid;
  grid-template: 24px 20px / 41px 1fr;
  background: #404040;
}
.app {
  grid-row: 1 / 3;
  height: 41px;
  border: 1px solid #2c2c2c;
  background: linear-gradient(#cfcfcf, #8f8f8f 45%, #6f6f6f);
}
.titlebar {
  display: flex;
  min-width: 0;
  background: #efe8d8;
  border-bottom: 1px solid #777;
}
.qat, .info, .qatmore { background: linear-gradient(#8a8a8a, #5c5c5c); }
.qat {
  display: flex;
  align-items: center;
  gap: 8px;
  width: 197px;
  padding-left: 9px;
}
.qat .mini { width: 8px; color: #333; margin: 0 1px 0 -3px; }
.combo {
  display: flex;
  align-items: center;
  height: 22px;
  padding: 0 2px;
  border: 1px solid #c6c6c6;
  background: linear-gradient(#fdfdfd, #ececec);
}
.combo select {
  flex: 1;
  min-width: 0;
  height: 20px;
  padding: 0 1px;
  border: 0;
  appearance: none;
  background: none;
  outline: 0;
}
.combo .arr { margin-left: -8px; pointer-events: none; color: #333; }
.workspace {
  width: 179px;
  height: 22px;
  margin-top: 1px;
  border: 0;
  color: #777;
  background: linear-gradient(#e6e6e6, #c6c6c6);
}
.qatmore { width: 17px; border: 1px solid #444; }
.caption {
  position: relative;
  display: flex;
  flex: 1;
  align-items: center;
  justify-content: center;
  gap: 10px;
  min-width: 0;
  padding-right: 2px;
  background: linear-gradient(90deg, #f1ece0, #efe6d0 50%, #ece4d2);
  color: #fff;
  font-weight: 600;
  text-shadow: 0 0 3px #a89a7a;
}
.caption span { position: relative; }
.ghost { position: absolute; inset: 0; overflow: hidden; filter: blur(3px); }
.ghost i { position: absolute; top: 8px; width: 16px; height: 12px; background: #7d7b78; opacity: .75; }
.ghost .b1 { left: 0; width: 18px; background: #b5a8a8; }
.ghost .b2 { left: 54px; background: #777; }
.ghost .b3 { left: 84px; background: #b9c9a0; }
.ghost .b4 { left: 114px; background: #e6b92c; }
.ghost .b5 { left: 150px; background: #4b62a0; }
.ghost .b6 { left: 187px; background: #8a8c80; }
.ghost .b7 { left: 222px; background: #4a82b8; }
.ghost .b8 { left: 258px; width: 22px; background: #999; }
.ghost .b9 { left: 296px; width: 9px; background: #b0524a; }
.ghost .b10 { left: 492px; top: 10px; width: 220px; height: 8px; background: #9c927e; }
.info { display: flex; align-items: center; width: 412px; color: #fff; }
.info .expand { width: 14px; height: 23px; border: 1px solid #444; }
.info input {
  width: 178px;
  height: 20px;
  margin-top: 2px;
  padding: 0 2px;
  border: 0;
  border-radius: 0;
  background: #f6f6f6;
  outline: 0;
  appearance: none;
}
.info input::placeholder { color: #777; font-style: italic; opacity: 1; }
.info button { margin-left: 5px; }
.info .expand { margin-left: 0; }
.info .sign { flex: 1; gap: 5px; margin-left: 8px; }
.info .sign svg:last-child { margin-left: auto; }
.info button > svg[width="6"] { color: #333; }
.info .exch { margin-left: 9px; padding-right: 8px; border-right: 1px solid #888; }
.info .help { margin-left: 9px; }
.info button:last-child { width: 12px; margin: 0 2px; }
.winbtns {
  display: flex;
  width: 103px;
  height: 18px;
  margin: 0 3px 0 16px;
  border: 1px solid #9a9588;
  border-top: 0;
  border-radius: 0 0 5px 5px;
}
.winbtns button { width: 28px; border-right: 1px solid #9a9588; }
.winbtns button:last-child { flex: 1; border: 0; }
.tabs { display: flex; align-items: flex-end; padding-left: 5px; color: #f2f2f2; }
.tabs a { height: 18px; padding: 0 9px; line-height: 17px; }
.tabs .on {
  margin-right: 1px;
  border-radius: 2px 2px 0 0;
  background: linear-gradient(#e2e2e2, #fff);
  color: #333;
}
.tabs button { height: 17px; padding-left: 20px; }

/* Ribbon */
.ribbon {
  display: flex;
  padding: 0 2px 0 2px;
  background: #fff;
  border-bottom: 2px solid #fff;
}
.panel {
  display: flex;
  flex: none;
  flex-direction: column;
  border-right: 1px solid #8a8a8a;
}
.body { display: grid; height: 80px; padding-top: 6px; }
.ptitle {
  display: flex;
  align-items: center;
  justify-content: center;
  gap: 7px;
  height: 18px;
  margin: 0 1px;
  border-top: 1px solid #d8d8d8;
  border-bottom: 1px solid #cfcfcf;
  background: #eee;
}
.stack { display: flex; flex-direction: column; gap: 2px; }
.row { display: flex; gap: 4px; }
.big { flex-direction: column; justify-content: flex-start; height: 70px; line-height: 18px; padding-top: 1px; }
.big svg:first-child { margin-bottom: 3px; overflow: visible; }
.big .dn { margin-top: 1px; }
.cmd { height: 22px; gap: 5px; justify-content: flex-start; }
.cmd .r { margin: 0 10px 0 auto; }
.ib, .grp, .split {
  display: flex;
  height: 22px;
  border: 1px solid #c6c6c6;
  background: linear-gradient(#fdfdfd, #ededed);
}
.ib { width: 24px; }
.ib.active { border-color: #2268b5; background: #b3d4f3; }
.split button:first-child { width: 23px; border-right: 1px solid #c6c6c6; }
.split button:last-child { flex: 1; }
.grp button { width: 22px; }
.grp button + button { width: 24px; border-left: 1px solid #c6c6c6; }
.sw { flex: none; width: 15px; height: 15px; border: 1px solid #000; background: #fff; }
.props .sw { margin-right: 1px; }
.ln { width: 64px; height: 1px; margin: 0 1px; background: #000; }
.ln.short { width: 59px; margin-left: 6px; }
.prop { display: flex; align-items: center; gap: 2px; height: 22px; }
.prop .combo { flex: 1; }
.lay { gap: 3px; }

.draw { width: 224px; }
.draw .body { grid-template-columns: 42px 45px 53px 40px 36px; }
.modify { width: 250px; }
.modify .body { grid-template-columns: 71px 70px 71px 24px; padding-left: 6px; }
.layers { width: 214px; }
.layers .body { display: flex; padding: 6px 3px 0 2px; }
.annot { width: 127px; }
.annot .body { grid-template-columns: 46px 1fr; column-gap: 4px; }
.block { width: 161px; }
.block .body { grid-template-columns: 42px 1fr; column-gap: 4px; }
.props { width: 205px; }
.props .body { display: flex; padding: 6px 2px 0 4px; }
.props .ptitle { justify-content: flex-end; padding-right: 4px; }
.props .launch { margin-left: 55px; }
.groups { width: 68px; }
.groups .body { grid-template-columns: 41px 24px; }
.utils { width: 97px; }
.utils .body { grid-template-columns: 70px 24px; }
.clip { width: 79px; border: 0; }
.clip .body { grid-template-columns: 54px 24px; }
.fill { flex: 1; background: linear-gradient(#d2d2d2, #8e8e8e); }

/* Drawing area */
.canvas {
  position: relative;
  flex: 1;
  min-height: 0;
  margin-top: 5px;
  border: solid #999;
  border-width: 1px 2px 0;
  background: #212830;
}
.drawing { position: absolute; inset: 0; }
.vctrl {
  position: absolute;
  top: 5px;
  left: 4px;
  display: flex;
  gap: 4px;
  color: #e2e2e2;
  font-size: 11px;
  font-weight: 600;
}
.docbtns { position: absolute; top: 9px; right: 10px; display: flex; gap: 10px; }
.cube {
  position: absolute;
  top: 46px;
  right: 22px;
  width: 120px;
  height: 120px;
  color: #b4b6b8;
  font: bold 22px/22px "Liberation Sans", Arial, sans-serif;
}
.cube b { position: absolute; width: 24px; text-align: center; }
.cube .n { left: 48px; top: -7px; }
.cube .s { left: 48px; bottom: -8px; }
.cube .w { left: -8px; top: 49px; }
.cube .e { right: -8px; top: 49px; }
.face {
  position: absolute;
  inset: 34px;
  border: 1px solid #888;
  background: #b2b3b5;
  color: #4a505a;
  font: bold 12px/32px "Open Sans", sans-serif;
}
.face span { width: 32px; background: #a2a8ad; }
.wcs {
  position: absolute;
  top: 192px;
  right: 58px;
  gap: 6px;
  width: 48px;
  height: 18px;
  border: 1px solid #8d92a0;
  border-radius: 4px;
  background: #9ea2af;
  color: #555b66;
  font: 11px/16px "Liberation Sans", Arial, sans-serif;
}
.navbar {
  position: absolute;
  top: 235px;
  right: 3px;
  border-radius: 4px;
  background: #5a5f65;
  box-shadow: 0 0 2px 1px #15191f;
}
.snaptip {
  position: absolute;
  left: 875px;
  top: 480px;
  width: 63px;
  height: 20px;
  padding-left: 4px;
  border: 1px solid #000;
  background: #999;
  color: #111;
  line-height: 18px;
}

/* Layout tabs */
.layouts {
  display: flex;
  height: 18px;
  margin: 0 2px;
  border-top: 1px solid #777;
  border-bottom: 2px solid #fff;
  background: #f0f0f0;
  color: #000;
  font-size: 11px;
  line-height: 15px;
}
.layouts a { padding: 0 3px; }
.layouts .nb { width: 15px; border-right: 1px solid #aaa; border-bottom: 1px solid #aaa; }
.layouts .model {
  width: 54px;
  padding: 0;
  background: #212830;
  clip-path: polygon(0 0, 100% 0, 88% 100%, 10% 100%);
  color: #fff;
  text-align: center;
}

/* Command window */
.command { display: flex; margin-top: 4px; background: #c8c8c8; }
.grip {
  width: 17px;
  border-right: 1px solid #eee;
  background: repeating-linear-gradient(90deg, #333 0 1px, #a0a0a0 1px 2px) 2px 3px / 12px 1px no-repeat, repeating-linear-gradient(90deg, #333 0 1px, #a0a0a0 1px 2px) 2px 5px / 12px 1px no-repeat, #a0a0a0;
}
.cmdtext {
  display: flex;
  flex: 1;
  flex-direction: column;
  color: #000;
  font: 12px/15px "DejaVu Sans Mono", monospace;
}
.cmdtext pre { height: 39px; margin: 0; padding-top: 1px; font: inherit; border-bottom: 1px solid #999; }
.cmdtext input { height: 18px; padding: 3px 0 0; border: 0; background: #fff; outline: 0; }

/* Status bar */
.status {
  display: flex;
  flex: none;
  height: 23px;
  border-top: 1px solid #111;
  border-bottom: 1px solid #222;
  background: linear-gradient(#949494, #767676);
}
.coords { width: 184px; padding-left: 13px; color: #a9a9a9; font-size: 11px; line-height: 22px; border-right: 1px solid #444; }
.status button { width: 22px; border-right: 1px solid #555; background: linear-gradient(#c4c4c4, #a6a6a6); color: #111; }
.status .on { background: linear-gradient(#d9edf4, #8fc6d6 50%, #a5d4e2); }
.status .space { flex: 1; border-right: 1px solid #444; }
.status .model { width: 44px; }
.status .gap { width: 6px; border-right: 1px solid #555; }
.status .gap.wide { width: 12px; }
.status .scale { width: 51px; gap: 4px; }
.tray { display: flex; align-items: center; gap: 4px; width: 52px; padding-left: 4px; border: 1px solid #555; background: #999; }
.status .more { width: 12px; }
.status .clean { width: 22px; }
```
